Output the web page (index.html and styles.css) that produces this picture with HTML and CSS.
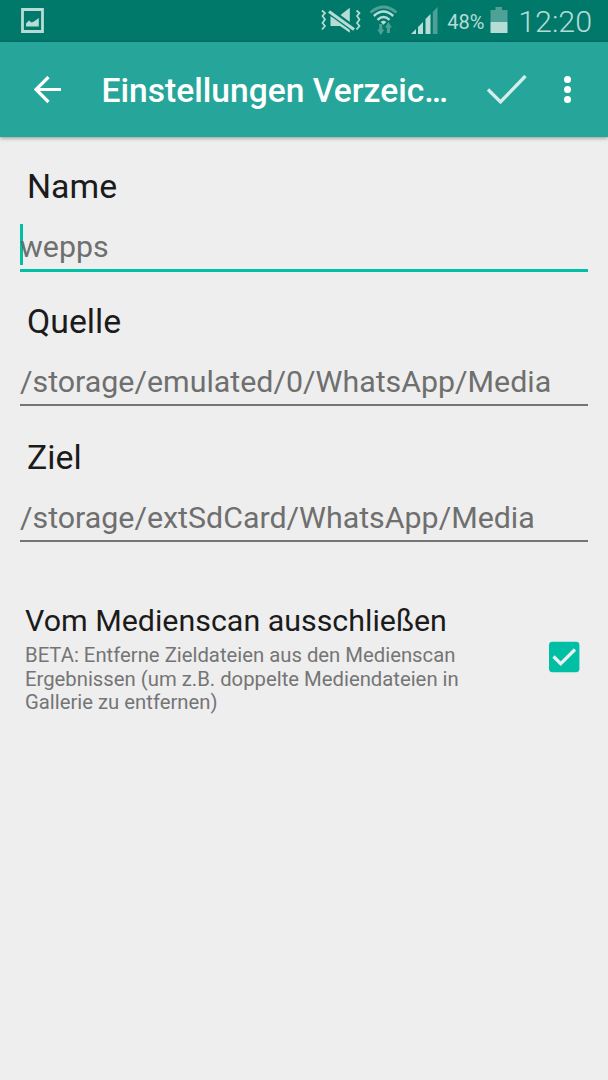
FILE: index.html
```html
<!DOCTYPE html>
<html lang="de">
<head>
    <meta charset="UTF-8">
    <meta name="viewport" content="width=device-width, initial-scale=1.0">
    <title>Einstellungen Verzeichnis</title>
    <link rel="stylesheet" href="styles.css">
</head>
<body>
    <div class="status-bar">
        <svg class="status-picture" width="24" height="26" viewBox="0 0 24 26">
            <path d="M1.500 1.500H21.500V23.500H1.500Z" fill="none" stroke="#b6dcd6" stroke-width="2.800"/>
            <path d="M5 18.500V15.500L8 12.500L10.500 14.500L13 13.500L17.800 10V18.500Z" fill="#b6dcd6"/>
        </svg>
        <div class="status-icons">
            <svg width="120" height="32" viewBox="320 5 120 32">
                <!-- vibrate / mute -->
                <g fill="none" stroke="#b6dcd6" stroke-width="1.7">
                    <path d="M322 10.5L325 13L322.5 16L325 19.5L322.5 23L325 26L322 29.5"/>
                    <path d="M356.5 10.5L359.5 13L357 16L359.5 19.5L357 23L359.5 26L356.5 29.5"/>
                </g>
                <path d="M340.500 15L349.800 7.800V22Z" fill="#b6dcd6"/>
                <path d="M330.500 16L334 17.500L349.800 29V32.800L340 26H330.500Z" fill="#b6dcd6"/>
                <path d="M329 11.500L354 29.500" stroke="#00796b" stroke-width="5.600"/>
                <path d="M329 11.500L354 29.500" stroke="#b6dcd6" stroke-width="3"/>
                <!-- wifi -->
                <g fill="none" stroke="#b6dcd6" stroke-width="2.400">
                    <path d="M370.500 12.500Q383.500 1.500 396.500 12.500" stroke="#4da196" stroke-width="2.800"/>
                    <path d="M373.800 16Q383.500 7 393.200 16"/>
                    <path d="M377.500 19.800Q383.500 14 389.500 19.800"/>
                </g>
                <path d="M380.700 22Q383.500 19.500 386.300 22L383.500 24.800Z" fill="#b6dcd6"/>
                <path d="M379.200 24H382.300V29.500H384.300L380.800 35L377.200 29.500H379.200Z M386.800 33H390V27.500H392L388.400 22L385 27.500H386.800Z" fill="#4da196"/>
                <!-- signal -->
                <path d="M411 34L416 29V34Z M418 34V27L423 22V34Z M425.500 34V19L430.500 14V34Z" fill="#b6dcd6"/>
                <path d="M432.800 34V12L437.500 7V34Z" fill="#4da196"/>
            </svg>
            <span class="battery-text">48%</span>
            <svg width="18" height="28" viewBox="0 0 18 28">
                <path d="M0.500 4H5.500V1H12V4H17.500V16H0.500Z" fill="#4da196"/>
                <path d="M0.500 16H17.500V27H0.500Z" fill="#b6dcd6"/>
            </svg>
            <span class="clock">12:20</span>
        </div>
    </div>

    <div class="app-bar">
        <svg class="back" width="28" height="28" viewBox="0 0 28 28">
            <path d="M27 13.500H3M14.500 1L2 13.500L14.500 26" fill="none" stroke="#fff" stroke-width="3.200"/>
        </svg>
        <h1 class="title">Einstellungen Verzeic…</h1>
        <svg class="done" width="42" height="32" viewBox="0 0 42 32">
            <path d="M2 15.500L14.500 28L39.500 2" fill="none" stroke="#d4eeeb" stroke-width="3.300"/>
        </svg>
        <svg class="more" width="8" height="28" viewBox="0 0 8 28">
            <circle cx="3.500" cy="3.500" r="3.500" fill="#fff"/>
            <circle cx="3.500" cy="13.500" r="3.500" fill="#fff"/>
            <circle cx="3.500" cy="23.500" r="3.500" fill="#fff"/>
        </svg>
    </div>

    <div class="content">
        <div class="field active">
            <div class="label">Name</div>
            <div class="value">wepps</div>
        </div>
        <div class="field">
            <div class="label">Quelle</div>
            <div class="value">/storage/emulated/0/WhatsApp/Media</div>
        </div>
        <div class="field">
            <div class="label">Ziel</div>
            <div class="value">/storage/extSdCard/WhatsApp/Media</div>
        </div>

        <div class="preference">
            <div class="preference-text">
                <div class="preference-title">Vom Medienscan ausschließen</div>
                <div class="preference-summary">BETA: Entferne Zieldateien aus den Medienscan<br>Ergebnissen (um z.B. doppelte Mediendateien in<br>Gallerie zu entfernen)</div>
            </div>
            <svg class="checkbox" width="32" height="32" viewBox="0 0 32 32">
                <rect x="1" y="0.800" width="30.400" height="30.400" rx="3.400" fill="#00bfa5"/>
                <path d="M5.500 15.500L12.700 22.700L27 8.500" fill="none" stroke="#eee" stroke-width="3.200"/>
            </svg>
        </div>
    </div>
</body>
</html>
```

FILE: styles.css
```css
* { box-sizing: border-box; }
body { margin: 0; min-height: 1080px; background: #eeeeee; color: #1b1b1b; font-family: Roboto, sans-serif; overflow: hidden; }

.status-bar { display: flex; justify-content: space-between; height: 42px; padding: 0 16px 0 21px; background: #00796b; color: #b6dcd6; }
.status-picture { margin-top: 8px; }
.status-icons { display: flex; }
.status-icons svg { display: block; margin-top: 5px; }
.battery-text { width: 41px; padding-left: 7px; font-size: 20px; line-height: 44px; }
.status-icons .battery-text + svg { margin-left: 9px; margin-top: 6px; }
.clock { margin-left: 10px; font-size: 30.4px; font-weight: 300; line-height: 44px; }

.app-bar { display: flex; align-items: center; height: 95px; padding: 0 36px 0 34px; background: #26a69a; box-shadow: 0 1px 4px rgba(0,0,0,0.4); color: #fff; }
.title { flex: 1; margin: 2px 0 0 39.5px; font-size: 33.6px; font-weight: 500; line-height: 40px; white-space: nowrap; }
.more { margin-left: 36px; }

.content { padding: 29.5px 20px 0; }
.field { height: 135.6px; }
.label { padding-left: 7px; font-size: 33.8px; line-height: 40px; }
.value { height: 47px; margin-top: 17px; border-bottom: 2px solid #757575; color: #6f6f6f; font-size: 30.35px; line-height: 45px; white-space: nowrap; }
.active .value { position: relative; height: 48px; margin-top: 17.5px; border-bottom: 3px solid #00bfa5; }
/* text cursor */
.active .value::before { content: ""; position: absolute; z-index: -1; left: 0; top: 0; width: 3px; height: 41px; background: #00bfa5; }

.preference { display: flex; justify-content: space-between; padding: 30px 8px 0 5px; }
.preference-title { font-size: 30.4px; line-height: 36px; }
.preference-summary { margin-top: 5px; color: #757575; font-size: 20.3px; line-height: 23.6px; }
.checkbox { margin-top: 37.5px; }
```
